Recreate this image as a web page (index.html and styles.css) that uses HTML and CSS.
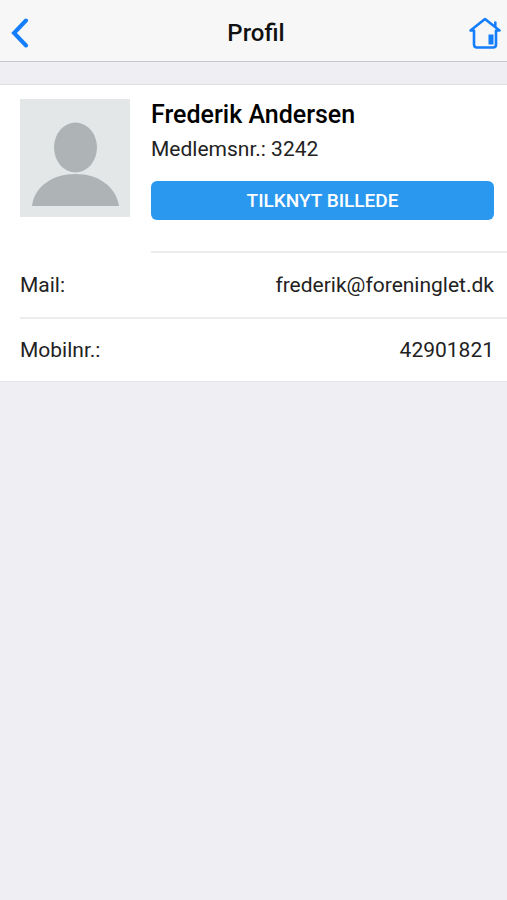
FILE: index.html
```html
<!DOCTYPE html>
<html lang="da">
<head>
  <meta charset="UTF-8" />
  <meta name="viewport" content="width=device-width, initial-scale=1.0" />
  <title>Profil</title>
  <link rel="stylesheet" href="styles.css">
</head>
<body>
  <header class="navbar">
    <a class="nav-link" href="#" aria-label="Tilbage">
      <svg width="18" height="30" viewBox="0 0 18 30" fill="none" stroke="#147efb" stroke-width="4" stroke-linecap="round" stroke-linejoin="miter">
        <path d="M15 2.500L3 15L15 27.500" />
      </svg>
    </a>
    <h1 class="title">Profil</h1>
    <a class="nav-link home" href="#" aria-label="Hjem">
      <svg width="32" height="32" viewBox="0 0 32 32" fill="none" stroke="#147efb" stroke-width="2.600" stroke-linecap="round" stroke-linejoin="round">
        <path d="M1.500 13.500L16 2L30.500 13.500H27V27.500Q27 30.500 24 30.500H8Q5 30.500 5 27.500V13.500Z" />
        <path d="M26.300 9V5.500" />
        <rect x="19.500" y="17.500" width="5" height="10" fill="#147efb" stroke="none" />
      </svg>
    </a>
  </header>

  <main class="card">
    <section class="profile">
      <svg class="avatar" viewBox="0 0 110 118" role="img" aria-label="Profilbillede">
        <rect width="110" height="118" fill="#e4e7e8" />
        <ellipse cx="55.500" cy="48.500" rx="21.500" ry="25" fill="#aeb3b6" />
        <path d="M12 107C14 88 32 75 55.500 75S96 88 99 107Z" fill="#aeb3b6" />
      </svg>
      <div class="info">
        <h2 class="name">Frederik Andersen</h2>
        <p class="member">Medlemsnr.: 3242</p>
        <button class="upload-btn" type="button">TILKNYT BILLEDE</button>
      </div>
    </section>
    <dl class="details">
      <div class="row">
        <dt>Mail:</dt>
        <dd>frederik@foreninglet.dk</dd>
      </div>
      <div class="row">
        <dt>Mobilnr.:</dt>
        <dd>42901821</dd>
      </div>
    </dl>
  </main>
</body>
</html>
```
FILE: styles.css
```css
* {
  box-sizing: border-box;
}

body {
  margin: 0;
  min-height: 100vh;
  background: #eeeef3;
  color: #222;
  font-family: Roboto, "Liberation Sans", sans-serif;
  font-size: 21px;
  line-height: 28px;
}

h1,
h2,
p,
dl,
dd {
  margin: 0;
}

.navbar {
  display: grid;
  grid-template-columns: 1fr auto 1fr;
  align-items: center;
  height: 62px;
  padding: 4px 6px 0 11px;
  background: #f7f7f8;
  border-bottom: 1px solid #c8c8ca;
}

.nav-link {
  display: flex;
}

.home {
  justify-content: flex-end;
}

.title {
  font-size: 24px;
  font-weight: 500;
  color: #111;
}

.card {
  margin-top: 22px;
  background: #fff;
  border-top: 1px solid #dfdfe3;
  border-bottom: 1px solid #e4e4e8;
}

.profile {
  display: flex;
  gap: 21px;
  padding: 14px 0 0 20px;
}

.avatar {
  width: 110px;
  height: 118px;
  flex: none;
}

.info {
  flex: 1;
  padding-right: 13px;
  padding-bottom: 31px;
  border-bottom: 2px solid #ececee;
}

.name {
  font-size: 25px;
  font-weight: 500;
  line-height: 32px;
  color: #000;
}

.member {
  margin: 4px 0 18px;
}

.upload-btn {
  display: block;
  width: 100%;
  height: 39px;
  padding: 0;
  border: none;
  border-radius: 6px;
  background: #2b98f0;
  color: #fff;
  font-family: inherit;
  font-size: 19px;
  font-weight: 500;
  cursor: pointer;
}

.details {
  padding-left: 20px;
}

.row {
  display: flex;
  justify-content: space-between;
  align-items: center;
  height: 64px;
  padding-right: 13px;
}

.row + .row {
  border-top: 2px solid #ececee;
}
```
